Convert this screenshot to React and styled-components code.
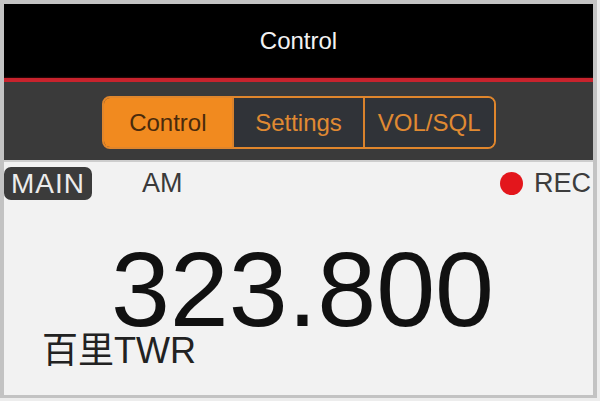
import styled, { createGlobalStyle } from "styled-components";

const GlobalStyle = createGlobalStyle`
  html, body {
    margin: 0;
    padding: 0;
    background: #ededed;
  }
  * {
    box-sizing: border-box;
  }
`;

const Frame = styled.div`
  width: 597px;
  height: 398px;
  border-style: solid;
  border-color: #c3c3c3;
  border-width: 4px 4px 3px 4px;
  display: flex;
  flex-direction: column;
  overflow: hidden;
  font-family: "Liberation Sans", "Noto Sans CJK SC", sans-serif;
`;

const Header = styled.header`
  height: 74px;
  background: #000;
  color: #f2f2f2;
  font-size: 24px;
  line-height: 1;
  display: flex;
  align-items: center;
  justify-content: center;
`;

const RedLine = styled.div`
  height: 4px;
  background: #c8232d;
  box-shadow: 0 0 2px rgba(200, 35, 45, 0.7);
`;

const SegmentBar = styled.nav`
  height: 80px;
  background: #3a3a3a;
  border-bottom: 2px solid #cdcdcd;
  display: flex;
  justify-content: center;
  padding-top: 14px;
`;

const Segments = styled.div`
  width: 394px;
  height: 53px;
  display: flex;
  border: 2px solid #e0862c;
  border-radius: 8px;
  overflow: hidden;
`;

const Segment = styled.button`
  flex: 1;
  border: none;
  border-left: ${(p) => (p.$first ? "none" : "2px solid #d9822c")};
  background: ${(p) => (p.$active ? "#f18a1f" : "#303338")};
  color: ${(p) => (p.$active ? "#4a2a0c" : "#e08a32")};
  font-family: inherit;
  font-size: 24px;
  line-height: 1;
  padding: 0;
  cursor: pointer;
`;

const Content = styled.main`
  flex: 1;
  background: #f2f2f2;
  display: flex;
  flex-direction: column;
`;

const TopRow = styled.div`
  display: flex;
  align-items: center;
  padding-top: 5px;
  padding-right: 2px;
  height: 38px;
`;

const Badge = styled.span`
  width: 88px;
  height: 33px;
  background: #3b3b3b;
  color: #ececec;
  border-radius: 7px;
  font-size: 28px;
  line-height: 1;
  letter-spacing: 1px;
  display: flex;
  align-items: center;
  justify-content: center;
`;

const Mode = styled.span`
  margin-left: 50px;
  font-size: 27px;
  line-height: 1;
  color: #3a3a3a;
`;

const Rec = styled.span`
  margin-left: auto;
  display: flex;
  align-items: center;
  gap: 11px;
  font-size: 27px;
  line-height: 1;
  color: #3d3d3d;
`;

const Dot = styled.span`
  width: 23px;
  height: 23px;
  border-radius: 50%;
  background: #e3161c;
`;

const Frequency = styled.div`
  margin-top: 47px;
  padding-left: 8px;
  text-align: center;
  font-size: 106px;
  line-height: 0.8;
  color: #111;
`;

const Station = styled.div`
  margin-top: 3px;
  padding-left: 38px;
  font-size: 36px;
  line-height: 0.9;
  color: #222;
`;

export default function App() {
  return (
    <>
      <GlobalStyle />
      <Frame>
        <Header>Control</Header>
        <RedLine />
        <SegmentBar>
          <Segments>
            <Segment $first $active>
              Control
            </Segment>
            <Segment>Settings</Segment>
            <Segment>VOL/SQL</Segment>
          </Segments>
        </SegmentBar>
        <Content>
          <TopRow>
            <Badge>MAIN</Badge>
            <Mode>AM</Mode>
            <Rec>
              <Dot />
              REC
            </Rec>
          </TopRow>
          <Frequency>323.800</Frequency>
          <Station>百里TWR</Station>
        </Content>
      </Frame>
    </>
  );
}
